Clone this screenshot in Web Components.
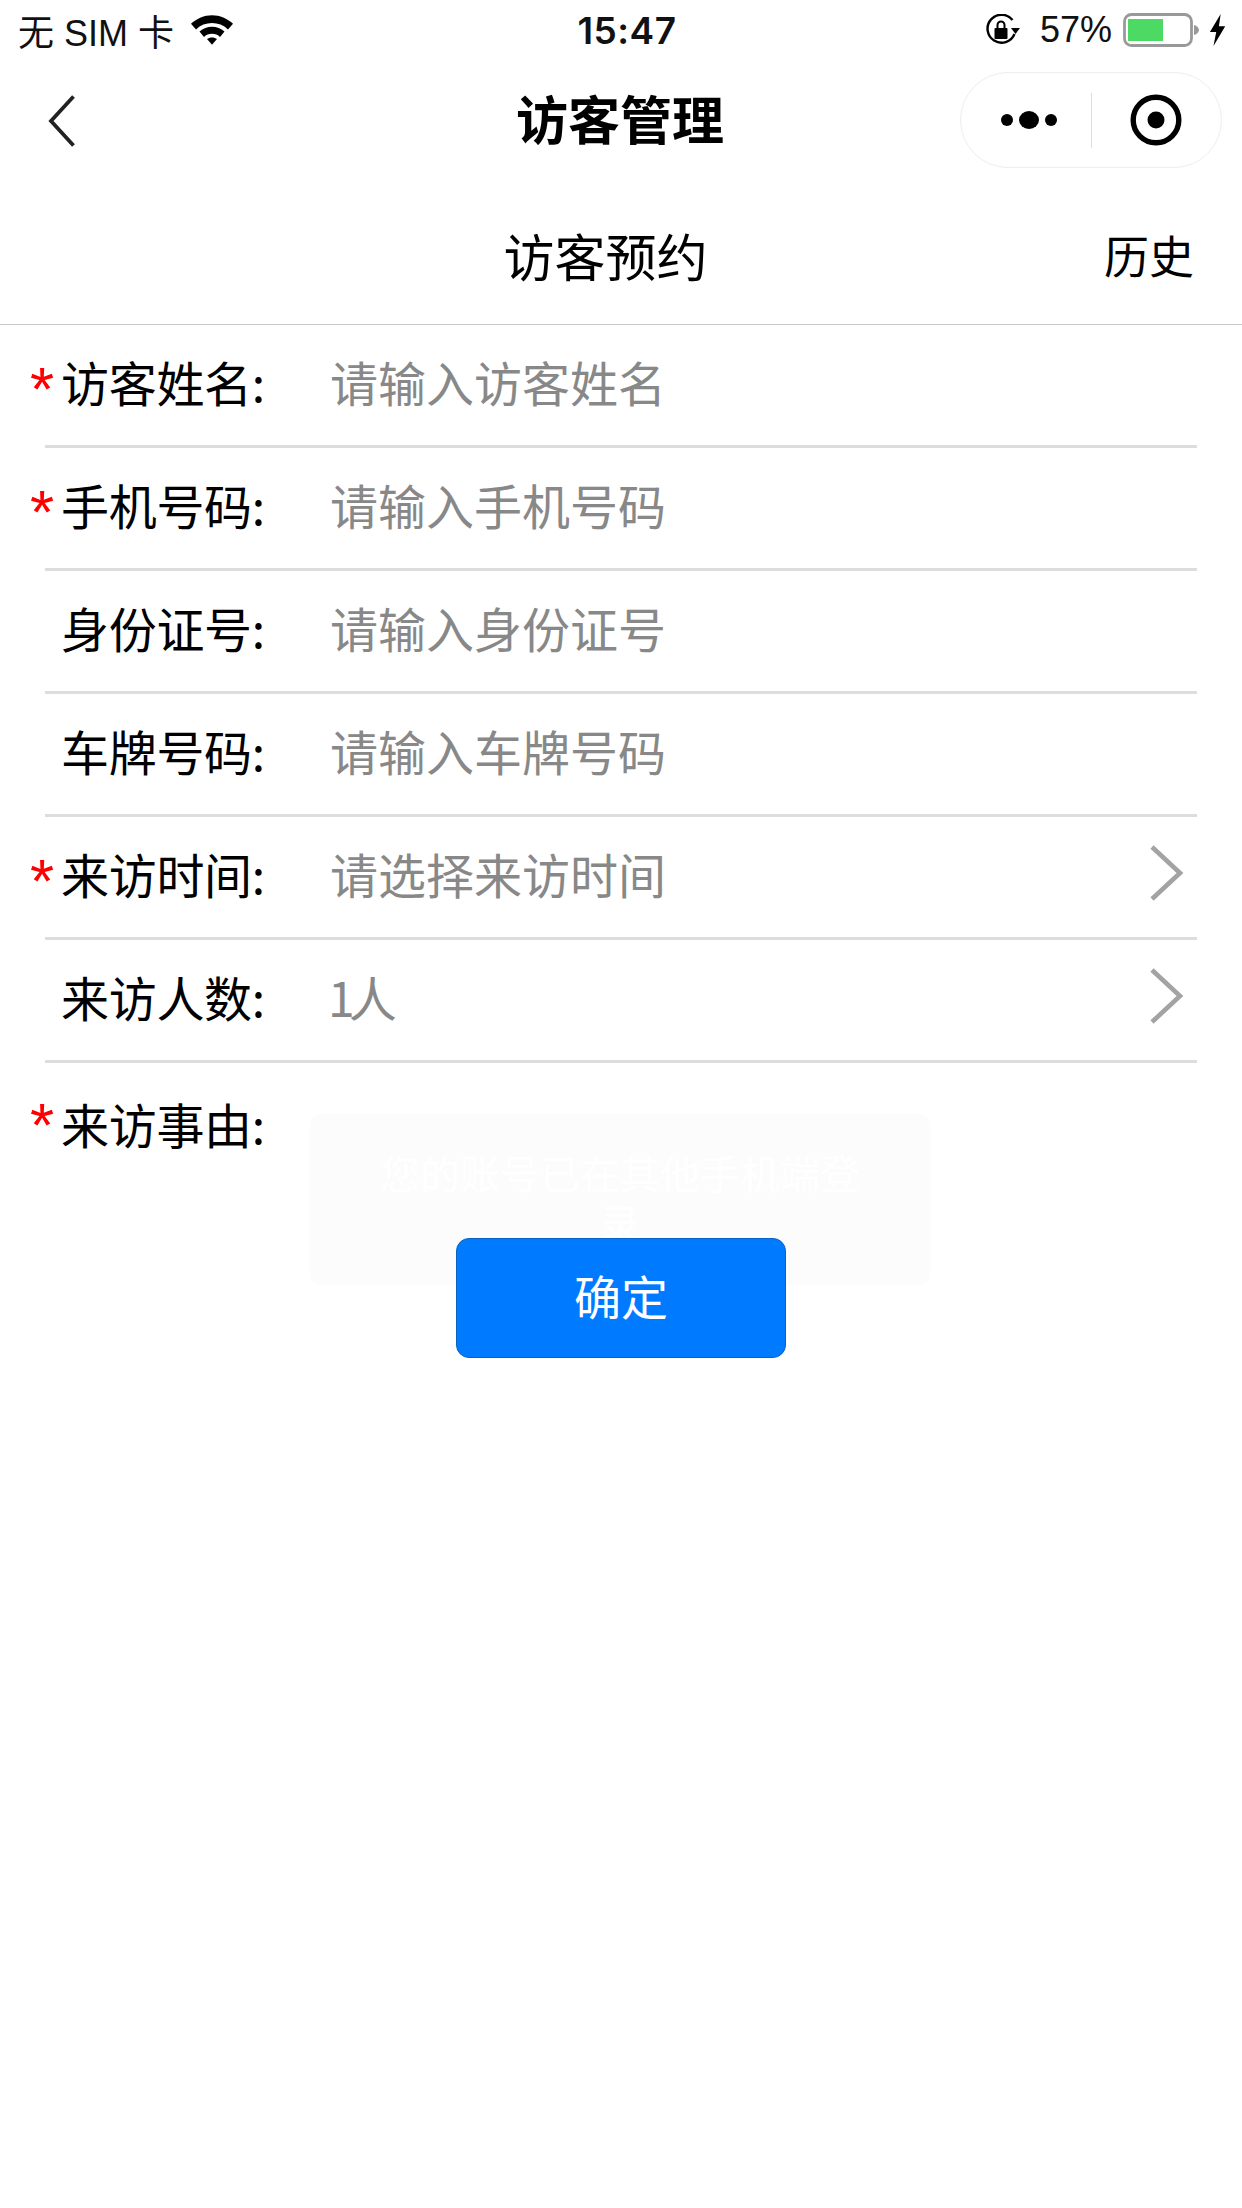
<!DOCTYPE html>
<html lang="zh-CN"><head><meta charset="utf-8"><title>访客管理</title>
<style>
html,body{margin:0;padding:0;background:#fff}
body{width:1242px;height:2208px;overflow:hidden;position:relative;font-family:"Liberation Sans","Noto Sans CJK SC",sans-serif;color:#000}
</style></head><body>
<status-bar></status-bar>
<nav-bar>访客管理</nav-bar>
<page-header>访客预约<span slot="action">历史</span></page-header>
<form-row required label="访客姓名:" placeholder="请输入访客姓名"></form-row>
<form-row required label="手机号码:" placeholder="请输入手机号码"></form-row>
<form-row label="身份证号:" placeholder="请输入身份证号"></form-row>
<form-row label="车牌号码:" placeholder="请输入车牌号码"></form-row>
<form-row required arrow label="来访时间:" placeholder="请选择来访时间"></form-row>
<form-row arrow value label="来访人数:" placeholder="1人"></form-row>
<reason-row label="来访事由:"></reason-row>
<submit-button>确定</submit-button>
<toast-box>您的账号已在其他手机端登录</toast-box>
<script>
const def=(name,html)=>customElements.define(name,class extends HTMLElement{
  connectedCallback(){
    if(this.shadowRoot)return;
    const r=this.attachShadow({mode:'open'});
    r.innerHTML=typeof html==='function'?html(this):html;
  }
});
const CJK='"Noto Sans CJK SC","Liberation Sans",sans-serif';
def('status-bar',`<style>
:host{display:flex;align-items:center;justify-content:space-between;height:60px;padding:0 15px 0 18px;box-sizing:border-box;font:36px "Liberation Sans","Noto Sans CJK SC",sans-serif;position:relative;color:#111}
.l,.r{display:flex;align-items:center}
.l{gap:16px}
.t{position:absolute;left:0;right:0;text-align:center;font:600 37px Inter,"Liberation Sans",sans-serif;padding-left:12px;letter-spacing:.5px}
svg{display:block}
</style>
<div class="l"><span style="white-space:nowrap">无 SIM 卡</span><svg width="44" height="36" viewBox="0 0 44 34" preserveAspectRatio="none"><path d="M22 3C14 3 7 6 1 11L6 16.500C10.500 12.500 16 10.500 22 10.500S33.500 12.500 38 16.500L43 11C37 6 30 3 22 3Z" fill="#000"/><path d="M22 14C17.500 14 13 15.500 9.500 18.500L14 23.500C16 21.500 19 20.500 22 20.500S28 21.500 30 23.500L34.500 18.500C31 15.500 26.500 14 22 14Z" fill="#000"/><path d="M22 24C20 24 18.500 24.500 17 25.500L22 31L27 25.500C25.500 24.500 24 24 22 24Z" fill="#000"/></svg></div>
<div class="t">15:47</div>
<div class="r">
<svg width="35" height="32" viewBox="0 0 35 32" style="margin-right:20px"><path d="M27.500 7A14 14 0 1 0 29.500 21" fill="none" stroke="#000" stroke-width="2.400" transform="translate(0 -1)"/><path d="M26 14h9l-4.500 6z" fill="#000"/><rect x="9.500" y="14" width="13" height="11" rx="1" fill="#000"/><path d="M12.500 14v-3a3.500 3.500 0 0 1 7 0v3" fill="none" stroke="#000" stroke-width="2"/></svg>
<span style="margin-right:11px;font-size:36px">57%</span>
<svg width="77" height="34" viewBox="0 0 77 34"><rect x="1.500" y="1.500" width="67" height="31" rx="7" fill="#fff" stroke="#999" stroke-width="2.800"/><rect x="5" y="6" width="35" height="22" fill="#4cd964"/><path d="M71 12c3 .5 5 3 5 5s-2 4.500-5 5z" fill="#999"/></svg>
<svg width="18" height="34" viewBox="0 0 20 36" style="margin-left:9px" preserveAspectRatio="none"><path d="M13 1 1 20h7L5 35 18 14h-7z" fill="#000"/></svg>
</div>`);
def('nav-bar',`<style>
:host{display:block;height:120px;position:relative}
.title{display:flex;align-items:center;justify-content:center;height:100%;box-sizing:border-box;padding:0 2px 6px 0;font:700 52px ${CJK}}
.back{position:absolute;left:48px;top:35px}
.cap{position:absolute;left:960px;top:12px;width:262px;height:96px;box-sizing:border-box;border:1px solid #eee;border-radius:48px;display:flex;align-items:center}
.cap>div{flex:1;display:flex;align-items:center;justify-content:center;height:100%}
.sep{position:absolute;left:130px;top:20px;width:1px;height:55px;background:#ddd}
.dots{display:flex;align-items:center;gap:6px;margin-left:5px}
.dots i{display:block;background:#000;border-radius:50%;width:12px;height:12px}
.dots i.b{width:20px;height:18px}
</style>
<svg class="back" width="28" height="52" viewBox="0 0 28 52"><path d="M25.500 1.500 3 26 25.500 50.500" fill="none" stroke="#222" stroke-width="3.800"/></svg>
<div class="title"><slot></slot></div>
<div class="cap"><div><div class="dots"><i></i><i class="b"></i><i></i></div></div><span class="sep"></span>
<div><svg width="52" height="52" viewBox="0 0 52 52"><circle cx="26" cy="26" r="22.800" fill="none" stroke="#000" stroke-width="5.400"/><circle cx="26" cy="26" r="8.500" fill="#000"/></svg></div></div>`);
def('page-header',`<style>
:host{display:block;height:145px;position:relative;box-sizing:border-box;border-bottom:1px solid #c9c9c9}
.t{position:absolute;left:0;width:1211px;text-align:center;top:4px;font:400 51px/142px ${CJK}}
.a{position:absolute;right:48px;top:4px;font:400 45px/142px ${CJK}}
</style><div class="t"><slot></slot></div><div class="a"><slot name="action"></slot></div>`);
const STAR='position:absolute;left:-15px;color:#f00;font:400 62px/62px "Liberation Sans",sans-serif';
def('form-row',h=>{
  const star=h.hasAttribute('required')?'<span class="star">*</span>':'';
  const arrow=h.hasAttribute('arrow')?'<svg class="arrow" width="34" height="56" viewBox="0 0 34 56"><path d="M2 2 30 28 2 54" fill="none" stroke="#a3a3a3" stroke-width="4.600"/></svg>':'';
  const isVal=h.hasAttribute('value');
  return `<style>
:host{display:block;height:123px;position:relative;box-sizing:border-box;padding:0 45px;font:400 48px ${CJK}}
.in{height:120px;box-sizing:border-box;padding-bottom:8px;display:flex;align-items:center;position:relative}
.bar{height:3px;background:#ddd}
.label{position:absolute;left:16px;white-space:nowrap;color:#000;letter-spacing:-.3px}
.ph{position:absolute;left:${isVal?'283px':'285px'};color:#888;white-space:nowrap;${isVal?'letter-spacing:-6px':''}}
.star{${STAR};top:33px}
.arrow{position:absolute;right:13px;top:28px}
</style><div class="in">${star}<span class="label">${h.getAttribute('label')}</span><span class="ph">${h.getAttribute('placeholder')}</span>${arrow}</div><div class="bar"></div>`;
});
def('reason-row',h=>`<style>
:host{display:block;height:175px;box-sizing:border-box;padding:0 45px;font:400 48px ${CJK}}
.in{height:80px;display:flex;align-items:center;position:relative;padding-top:20px}
.label{position:absolute;left:16px;white-space:nowrap;letter-spacing:-.3px}
.star{${STAR};top:31px}
</style><div class="in"><span class="star">*</span><span class="label">${h.getAttribute('label')}</span></div>`);
def('submit-button',`<style>
:host{display:flex;justify-content:center;position:relative;z-index:1;font:400 47px ${CJK}}
.b{width:330px;height:120px;box-sizing:border-box;padding-bottom:8px;background:#007aff;border:1px solid #0a62c4;border-radius:13px;color:#fff;display:flex;align-items:center;justify-content:center}
</style><div class="b"><slot></slot></div>`);
def('toast-box',`<style>
:host{position:absolute;left:310px;top:1114px;width:620px;height:171px;box-sizing:border-box;padding:33px 60px 0;background:#fcfcfc;border-radius:10px;color:#fff;font:400 40px/50px ${CJK};text-align:center;z-index:0}
</style><slot></slot>`);
</script>
</body></html>
